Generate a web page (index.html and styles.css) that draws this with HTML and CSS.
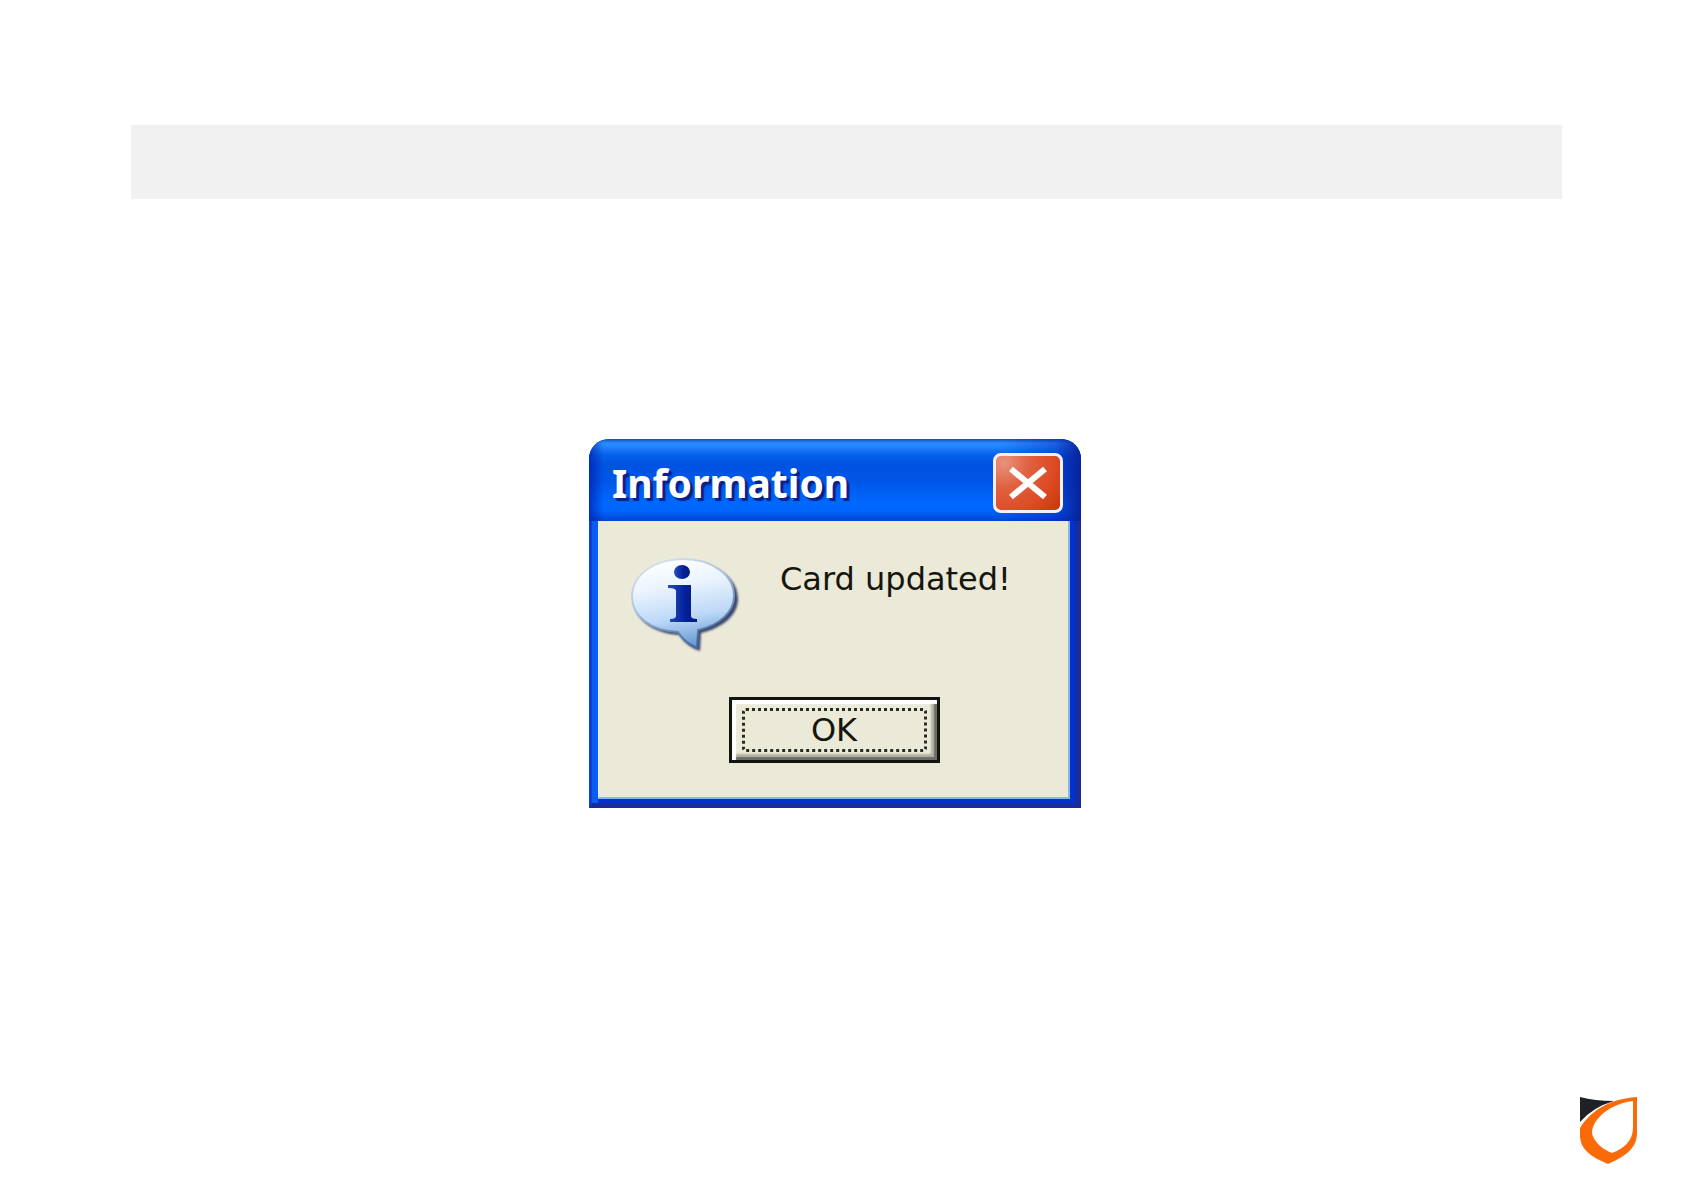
FILE: index.html
```
<!DOCTYPE html>
<html lang="en">
<head>
    <meta charset="UTF-8">
    <meta name="viewport" content="width=device-width, initial-scale=1.0">
    <title>Information</title>
    <link rel="stylesheet" href="styles.css">
</head>
<body>

    <div class="page">
        <header class="banner"></header>

        <main class="content">
            <div class="dialog" role="alertdialog" aria-labelledby="dialogTitle" aria-describedby="dialogText">
                <div class="title-bar">
                    <h1 id="dialogTitle">Information</h1>
                    <button type="button" class="close-button" aria-label="Close">
                        <svg viewBox="0 0 40 34" width="40" height="34">
                            <path d="M3 3 L37 31 M37 3 L3 31" stroke="#fff" stroke-width="6" fill="none"/>
                        </svg>
                    </button>
                </div>
                <div class="dialog-body">
                    <div class="message">
                        <svg class="info-icon" viewBox="0 0 110 98" width="110" height="98" aria-hidden="true">
                            <defs>
                                <linearGradient id="bubble" x1="0.4" y1="0" x2="0.6" y2="1">
                                    <stop offset="0" stop-color="#ffffff"/>
                                    <stop offset="0.3" stop-color="#eaf3fe"/>
                                    <stop offset="0.65" stop-color="#bcd8f8"/>
                                    <stop offset="1" stop-color="#5f92cf"/>
                                </linearGradient>
                                <linearGradient id="edge" x1="0" y1="0" x2="0.5" y2="1">
                                    <stop offset="0" stop-color="#e4eaee"/>
                                    <stop offset="0.5" stop-color="#a9c0dc"/>
                                    <stop offset="1" stop-color="#456a9e"/>
                                </linearGradient>
                                <linearGradient id="letter" x1="0" y1="0" x2="1" y2="0">
                                    <stop offset="0" stop-color="#2450b4"/>
                                    <stop offset="0.6" stop-color="#03209a"/>
                                    <stop offset="1" stop-color="#061a78"/>
                                </linearGradient>
                                <filter id="soft" x="-10%" y="-10%" width="120%" height="120%">
                                    <feGaussianBlur stdDeviation="1"/>
                                </filter>
                            </defs>
                            <path d="M53 4 C84 4 108 20 108 42 C108 58 93 71 71 76 L70 94 Q57 90 49 78 C22 76 4 62 4 42 C4 20 26 4 53 4 Z" fill="#3c4670" filter="url(#soft)"/>
                            <path d="M53 2 C82 2 104 18 104 39 C104 55 90 68 68 73 L67 91 Q55 86 48 75 C21 74 2 59 2 40 C2 18 24 2 53 2 Z" fill="url(#bubble)" stroke="url(#edge)" stroke-width="2"/>
                            <ellipse cx="52" cy="15" rx="8" ry="7" fill="url(#letter)"/>
                            <path d="M38 28 H61 V59 Q61 62 67 62 V65 H40 V62 Q46 62 46 59 V34 Q46 31 38 31 Z" fill="url(#letter)"/>
                        </svg>
                        <p id="dialogText">Card updated!</p>
                    </div>
                    <button type="button" class="ok-button"><span>OK</span></button>
                </div>
            </div>
        </main>

        <footer class="page-footer">
            <svg viewBox="0 0 57 67" width="57" height="67" role="img" aria-label="Logo">
                <path d="M0 0 Q15 4 34 4 Q13 10 0 25 Z" fill="#1f2224"/>
                <path fill-rule="evenodd" fill="#fb6a09" d="M57 0 V36 C57 51 46 59 28 67 C12 60 0 53 0 38 V31 C11 14 28 2 57 0 Z M53 4 C34 6 13 19 12 36 C13 44 23 53 32 56 C44 52 53 43 53 31 Z"/>
            </svg>
        </footer>
    </div>

    <script>
        const dialog = document.querySelector('.dialog');
        document.querySelectorAll('.dialog button').forEach(function (button) {
            button.addEventListener('click', function () {
                dialog.hidden = true;
            });
        });
    </script>
</body>
</html>
```
FILE: styles.css
```
* {
    box-sizing: border-box;
}

body {
    margin: 0;
    background-color: #ffffff;
    font-family: "DejaVu Sans", Verdana, sans-serif;
}

.page {
    display: flex;
    flex-direction: column;
    min-height: 100vh;
    padding: 125px 47px 27px 131px;
}

.banner {
    height: 74px;
    margin-right: 75px;
    background-color: #f1f1f1;
}

.content {
    display: flex;
    justify-content: center;
    padding: 240px 98px 24px 0;
}

.dialog {
    width: 492px;
    max-width: 100%;
    border-radius: 20px 20px 0 0;
    background-color: #0046e0;
    overflow: hidden;
}

.dialog[hidden] {
    display: none;
}

.title-bar {
    display: flex;
    justify-content: space-between;
    align-items: center;
    height: 82px;
    padding: 6px 18px 0 23px;
    background:
        linear-gradient(to right, rgba(0, 20, 160, 0.6), transparent 3%, transparent 84%, rgba(0, 30, 180, 0.4) 95%, #0a2299),
        linear-gradient(#0a4fc8, #2b8cff 5%, #2484fb 9%, #0560ea 20%, #0053e1 32%, #0056e8 52%, #0068ff 78%, #0064fa 88%, #0045d0);
}

.title-bar h1 {
    margin: 0;
    color: #ffffff;
    font-family: "Noto Sans", sans-serif;
    font-size: 39px;
    line-height: 44px;
    text-shadow: 3px 3px 1px #0a2088;
}

.close-button {
    display: flex;
    justify-content: center;
    align-items: center;
    width: 70px;
    height: 60px;
    padding: 0;
    border: 3px solid #f4efff;
    border-radius: 8px;
    background: radial-gradient(circle at 12% 12%, #e8937c, #e0603f 35%, #dc4a24 70%, #c83606);
    cursor: pointer;
}

.dialog-body {
    display: flex;
    flex-direction: column;
    align-items: center;
    padding: 36px 5px 40px 6px;
    border: solid;
    border-width: 0 6px 5px 3px;
    border-color: #1a2b9c #1a2b9c #1a2b9c #0a3fdc;
    background-color: #ebe9d8;
    box-shadow: inset 6px 0 0 #0b5cf0, inset -5px -4px 0 #0033d4, inset -7px -6px 0 #8cb4ee;
}

.message {
    display: flex;
    align-items: flex-start;
    gap: 40px;
    width: 100%;
    padding: 0 32px;
}

.info-icon {
    flex: none;
}

.message p {
    margin: 2px 0 0;
    color: #16160f;
    font-size: 32px;
    line-height: 40px;
}

.ok-button {
    width: 211px;
    height: 66px;
    margin-top: 42px;
    padding: 8px 10px;
    border: 3px solid #14140f;
    background-color: #ebe9d8;
    box-shadow: inset 4px 4px 1px #ffffff, inset -3px -3px 1px #6f6e63, inset -6px -6px 2px #b4b2a2;
    color: #16160f;
    font-family: inherit;
    font-size: 32px;
    line-height: 38px;
    cursor: pointer;
}

.ok-button span {
    display: block;
    border: 3px dotted #2a2a22;
    border-radius: 4px;
}

.page-footer {
    display: flex;
    justify-content: flex-end;
    margin-top: auto;
}
```
